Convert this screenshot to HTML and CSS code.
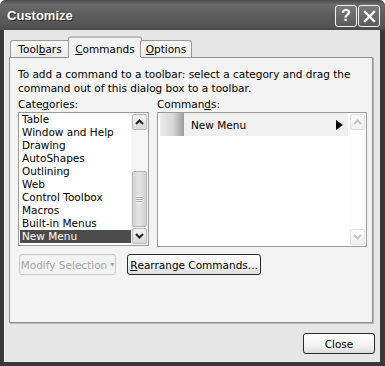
FILE: index.html
```html
<!DOCTYPE html>
<html lang="en">
<head>
    <meta charset="UTF-8">
    <title>Customize</title>
    <link rel="stylesheet" href="styles.css">
</head>
<body>
    <div class="window">
        <div class="titlebar">
            <span class="title">Customize</span>
            <div class="caption-buttons">
                <div class="caption-btn">?</div>
                <div class="caption-btn">
                    <svg width="13" height="13" viewBox="0 0 13 13">
                        <path d="M2 2 L11 11 M11 2 L2 11" stroke="#fff" stroke-width="2.4" stroke-linecap="square"/>
                    </svg>
                </div>
            </div>
        </div>

        <div class="client">
            <div class="tabs">
                <div class="tab tab-toolbars">Tool<u>b</u>ars</div>
                <div class="tab active"><u>C</u>ommands</div>
                <div class="tab tab-options"><u>O</u>ptions</div>
            </div>

            <div class="panel">
                <p class="intro">To add a command to a toolbar: select a category and drag the<br>command out of this dialog box to a toolbar.</p>

                <div class="columns">
                    <div class="col col-categories">
                        <div class="label">Cate<u>g</u>ories:</div>
                        <div class="listbox categories">
                            <ul class="items">
                                <li>Table</li>
                                <li>Window and Help</li>
                                <li>Drawing</li>
                                <li>AutoShapes</li>
                                <li>Outlining</li>
                                <li>Web</li>
                                <li>Control Toolbox</li>
                                <li>Macros</li>
                                <li>Built-in Menus</li>
                                <li class="selected">New Menu</li>
                            </ul>
                            <div class="scrollbar">
                                <div class="sb-btn">
                                    <svg width="9" height="6" viewBox="0 0 9 6"><path d="M1 5 L4.5 1.5 L8 5" fill="none" stroke="#222" stroke-width="2"/></svg>
                                </div>
                                <div class="sb-track">
                                    <div class="sb-thumb"><span class="grip"></span></div>
                                </div>
                                <div class="sb-btn">
                                    <svg width="9" height="6" viewBox="0 0 9 6"><path d="M1 1 L4.5 4.5 L8 1" fill="none" stroke="#222" stroke-width="2"/></svg>
                                </div>
                            </div>
                        </div>
                    </div>

                    <div class="col col-commands">
                        <div class="label">Comman<u>d</u>s:</div>
                        <div class="listbox commands">
                            <div class="items">
                                <div class="command">
                                    <span class="cmd-icon"></span>
                                    <span class="cmd-text">New Menu</span>
                                    <svg class="cmd-arrow" width="7" height="10" viewBox="0 0 7 10"><path d="M0 0 L7 5 L0 10 Z" fill="#000"/></svg>
                                </div>
                            </div>
                            <div class="scrollbar disabled">
                                <div class="sb-btn">
                                    <svg width="9" height="6" viewBox="0 0 9 6"><path d="M1 5 L4.5 1.5 L8 5" fill="none" stroke="#c4c4c4" stroke-width="2"/></svg>
                                </div>
                                <div class="sb-track"></div>
                                <div class="sb-btn">
                                    <svg width="9" height="6" viewBox="0 0 9 6"><path d="M1 1 L4.5 4.5 L8 1" fill="none" stroke="#c4c4c4" stroke-width="2"/></svg>
                                </div>
                            </div>
                        </div>
                    </div>
                </div>

                <div class="actions">
                    <div class="button disabled modify">Modify Selection <span class="drop">&#9662;</span></div>
                    <div class="button rearrange"><u>R</u>earrange Commands...</div>
                </div>
            </div>

            <div class="footer">
                <div class="button close">Close</div>
            </div>
        </div>
    </div>
</body>
</html>
```

FILE: styles.css
```css
body {
    margin: 0;
    background: #fff;
    font-family: "DejaVu Sans", Verdana, sans-serif;
    font-size: 10.5px;
    color: #000;
}
u {
    text-decoration: underline;
    text-underline-offset: 1px;
}
.window {
    width: 385px;
    height: 366px;
    box-sizing: border-box;
    background: #3a3a3a;
    padding: 0 5px 4px 4px;
    display: flex;
    flex-direction: column;
    border-radius: 6px 6px 0 0;
}
.titlebar {
    height: 30px;
    margin: 0 -5px 0 -4px;
    padding: 0 5px 0 7px;
    display: flex;
    align-items: center;
    justify-content: space-between;
    background: linear-gradient(#4a4a4a, #6a6a6a 15%, #5c5c5c 50%, #555 85%, #4a4a4a);
    border-radius: 6px 6px 0 0;
}
.title {
    color: #fff;
    font-family: "Liberation Sans", Arial, sans-serif;
    font-weight: bold;
    font-size: 13px;
    text-shadow: 1px 1px 0 #2a2a2a;
    padding-top: 1px;
}
.caption-buttons {
    display: flex;
    gap: 1px;
    padding-top: 2px;
}
.caption-btn {
    width: 20px;
    height: 20px;
    border: 1px solid #f0f0f0;
    border-radius: 3px;
    background: linear-gradient(#7a7a7a, #5a5a5a);
    color: #fff;
    font-family: "Liberation Sans", Arial, sans-serif;
    font-weight: bold;
    font-size: 16px;
    display: flex;
    align-items: center;
    justify-content: center;
}
.client {
    flex: 1;
    background: #e6e6e6;
    border-left: 1px solid #f4f4f4;
    padding: 6px 0 0 0;
    display: flex;
    flex-direction: column;
}
.tabs {
    display: flex;
    align-items: flex-end;
    height: 22px;
    padding-left: 5px;
    margin-bottom: -1px;
    position: relative;
    z-index: 1;
}
.tab {
    box-sizing: border-box;
    height: 17px;
    margin-bottom: 1px;
    padding-top: 2px;
    text-align: center;
    white-space: nowrap;
    border: 1px solid #9a9a9a;
    border-bottom: none;
    border-radius: 3px 3px 0 0;
    background: linear-gradient(#fafafa, #ececec);
}
.tab-toolbars {
    width: 60px;
}
.tab-options {
    width: 52px;
}
.tab.active {
    width: 74px;
    height: 22px;
    margin: 0 -2px;
    padding-top: 5px;
    background: #f3f3f3;
    border-top: 2px solid #bcbcbc;
}
.panel {
    margin: 0 7px 0 4px;
    height: 266px;
    box-sizing: border-box;
    border: 1px solid #929292;
    background: #f3f3f3;
    box-shadow: 1px 1px 0 #b4b4b4;
    padding: 9px 0 0 8px;
}
.intro {
    margin: 0;
    line-height: 14px;
}
.columns {
    display: flex;
    gap: 8px;
    margin-top: 2px;
}
.label {
    line-height: 14px;
    margin-bottom: 1px;
}
.listbox {
    border: 1px solid #9a9a9a;
    background: #fff;
    display: flex;
    box-sizing: border-box;
}
.categories {
    width: 131px;
    height: 134px;
}
.commands {
    width: 210px;
    height: 135px;
}
.items {
    list-style: none;
    margin: 0;
    padding: 0 0 0 1px;
    flex: 1;
}
.items li {
    height: 13px;
    line-height: 13px;
    padding-left: 2px;
}
.items li.selected {
    background: #4c4c4c;
    color: #fff;
}
.scrollbar {
    width: 17px;
    display: flex;
    flex-direction: column;
    background: #f6f6f6;
    padding: 1px 0;
    box-sizing: border-box;
}
.sb-btn {
    height: 16px;
    margin: 0 1px;
    border: 1px solid #b8b8b8;
    border-radius: 2px;
    background: linear-gradient(#f4f4f4, #d8d8d8);
    display: flex;
    align-items: center;
    justify-content: center;
    box-sizing: border-box;
}
.sb-track {
    flex: 1;
    display: flex;
    flex-direction: column;
    justify-content: flex-end;
    padding-bottom: 1px;
}
.sb-thumb {
    height: 54px;
    margin: 0 1px;
    border: 1px solid #b4b4b4;
    border-radius: 2px;
    background: linear-gradient(90deg, #d4d4d4, #e4e4e4 50%, #d0d0d0);
    display: flex;
    align-items: center;
    justify-content: center;
}
.grip {
    width: 7px;
    height: 7px;
    background: repeating-linear-gradient(#f8f8f8 0 1px, #a8a8a8 1px 2px);
}
.scrollbar.disabled {
    background: #fdfdfd;
}
.scrollbar.disabled .sb-btn {
    border-color: #e0e0e0;
    background: linear-gradient(#fcfcfc, #f0f0f0);
}
.commands .items {
    padding: 0 1px 0 2px;
}
.command {
    height: 23px;
    display: flex;
    align-items: center;
    background: #f0f0f0;
}
.cmd-icon {
    width: 24px;
    height: 23px;
    background: linear-gradient(90deg, #ececec, #d6d6d6 55%, #9c9c9c);
}
.cmd-text {
    flex: 1;
    padding-left: 7px;
}
.cmd-arrow {
    margin-right: 5px;
}
.actions {
    display: flex;
    gap: 11px;
    margin-top: 7px;
    padding-left: 1px;
}
.button {
    height: 21px;
    box-sizing: border-box;
    border: 1px solid #2a2a2a;
    border-radius: 3px;
    background: linear-gradient(#ffffff, #f2f2f2 60%, #dcdcdc);
    display: flex;
    align-items: center;
    justify-content: center;
    white-space: nowrap;
}
.button.disabled {
    border-color: #c8c8c8;
    background: #f3f3f3;
    color: #a4a4a4;
}
.modify {
    width: 97px;
}
.drop {
    font-size: 8px;
    margin-left: 3px;
}
.rearrange {
    width: 134px;
}
.footer {
    display: flex;
    justify-content: flex-end;
    padding: 10px 5px 0 0;
}
.close {
    width: 72px;
}
```
